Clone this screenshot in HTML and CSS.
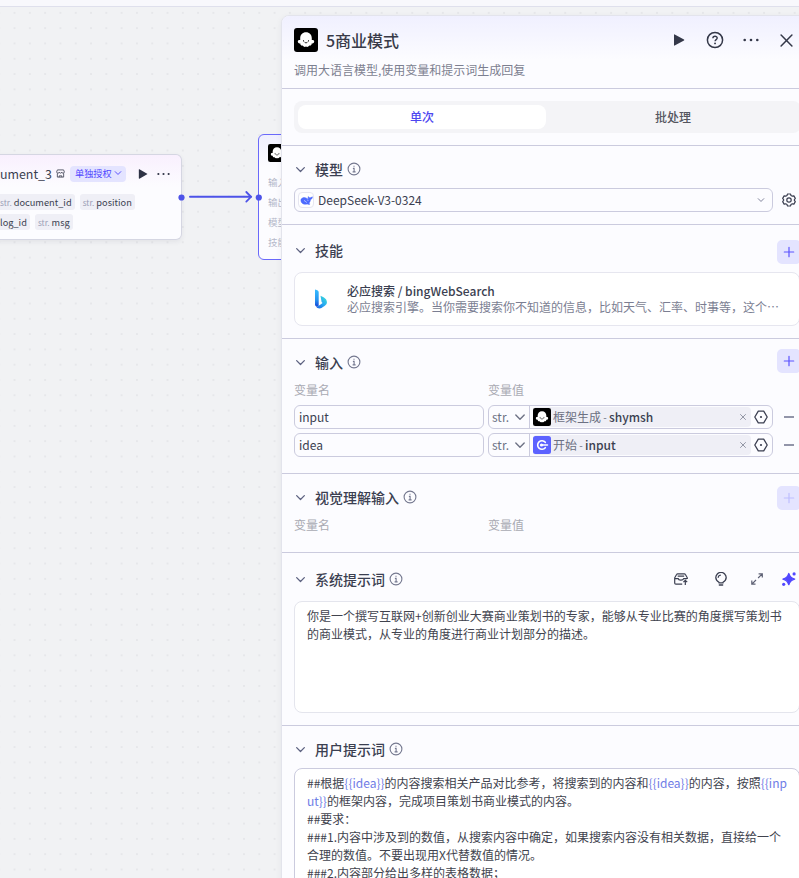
FILE: index.html
```html
<!DOCTYPE html>
<html lang="zh-CN">
<head>
<meta charset="utf-8">
<title>5商业模式</title>
<link rel="stylesheet" href="styles.css">
</head>
<body>
<svg class="defs" width="0" height="0" aria-hidden="true">
  <symbol id="ghost" viewBox="0 0 24 24"><rect width="24" height="24" rx="3" fill="#000"/><path d="M12 4.200c3.400 0 5.800 2.500 5.800 6v1.800c1.500-.4 2.400.4 2.400 1.500 0 1.500-1.200 2.100-2.500 2.100 0 1.800-1.200 2.300-2.500 2-.6 1.300-2.200 1.700-3.200.9-1 .8-2.600.4-3.200-.9-1.300.3-2.500-.2-2.500-2-1.300 0-2.500-.6-2.500-2.100 0-1.100.9-1.900 2.400-1.500v-1.800c0-3.500 2.400-6 5.800-6z" fill="#fff"/><path d="M9.500 12.500v.6M14.500 12.500v.6M10.400 14c.8 1.300 2.400 1.300 3.200 0" fill="none" stroke="#222" stroke-width=".9" stroke-linecap="round"/></symbol>
  <symbol id="chev" viewBox="0 0 12 12"><path d="M1.800 4 6 8.200 10.200 4" fill="none" stroke="currentColor" stroke-width="1.400" stroke-linecap="round" stroke-linejoin="round"/></symbol>
  <symbol id="info" viewBox="0 0 14 14"><circle cx="7" cy="7" r="5.900" fill="none" stroke="currentColor" stroke-width="1.100"/><path d="M7 3.700v1.100M5.900 6.400H7.100v3.300M5.600 9.900h3" fill="none" stroke="currentColor" stroke-width="1.100"/></symbol>
  <symbol id="plus" viewBox="0 0 12 12"><path d="M6 1.300v9.400M1.300 6h9.400" fill="none" stroke="currentColor" stroke-width="1.200" stroke-linecap="round"/></symbol>
  <symbol id="hex" viewBox="0 0 14 14"><path d="M4.300 1.200h5.400L13.200 7l-3.500 5.800H4.300L.8 7z" fill="none" stroke="currentColor" stroke-width="1.300" stroke-linejoin="round"/><circle cx="7" cy="7" r="1.100" fill="currentColor"/></symbol>
  <symbol id="play" viewBox="0 0 12 12"><path d="M1 .8v10.400c0 .4.400.6.700.4l9.300-5.200c.4-.2.4-.6 0-.8L1.700.4C1.400.2 1 .4 1 .8z" fill="currentColor"/></symbol>
  <symbol id="more" viewBox="0 0 16 4"><circle cx="1.700" cy="2" r="1.300" fill="currentColor"/><circle cx="8" cy="2" r="1.300" fill="currentColor"/><circle cx="14.300" cy="2" r="1.300" fill="currentColor"/></symbol>
  <symbol id="cross" viewBox="0 0 12 12"><path d="M1 1l10 10M11 1 1 11" fill="none" stroke="currentColor" stroke-width="1.400" stroke-linecap="round"/></symbol>
</svg>

<div class="topbar"></div>
<main class="stage">
  <section class="node node-doc">
    <div class="node-head">
      <span class="node-name">ument_3</span>
      <svg class="store" viewBox="0 0 10 10"><path d="M1.600 1h6.800l.9 2.200c0 2-2.700 2-2.900.3C6.200 5 3.800 5 3.600 3.500 3.400 5.200.7 5.200.7 3.200zM1.500 4.800V9h7V4.800M3.500 9V7.600h3V9" fill="none" stroke="currentColor" stroke-width=".9" stroke-linejoin="round"/></svg>
      <span class="auth">单独授权<svg viewBox="0 0 12 12"><use href="#chev"/></svg></span>
      <svg class="n-play" viewBox="0 0 12 12"><use href="#play"/></svg>
      <svg class="n-more" viewBox="0 0 16 4"><use href="#more"/></svg>
    </div>
    <div class="chips"><span class="chip"><i>str.</i>document_id</span><span class="chip"><i>str.</i>position</span></div>
    <div class="chips"><span class="chip">log_id</span><span class="chip"><i>str.</i>msg</span></div>
  </section>
  <section class="node node-llm">
    <svg class="n-icon" viewBox="0 0 24 24"><use href="#ghost"/></svg>
    <p>输入</p><p>输出</p><p>模型</p><p>技能</p>
  </section>
  <svg class="edge" viewBox="0 0 86 16"><circle cx="3.500" cy="8.500" r="3.100" fill="#4d53e8"/><path d="M12 7.800h61" stroke="#4d53e8" stroke-width="2" stroke-linecap="round"/><path d="M68.300 3l4.700 4.800-4.700 4.800" fill="none" stroke="#4d53e8" stroke-width="1.800" stroke-linecap="round"/><circle cx="80.800" cy="8.500" r="3.100" fill="#4d53e8"/></svg>

  <aside class="panel">
    <header class="head">
      <div class="head-row">
        <svg class="logo" viewBox="0 0 24 24"><use href="#ghost"/></svg>
        <h1>5商业模式</h1>
        <div class="tools">
          <svg class="t-play" viewBox="0 0 12 12"><use href="#play"/></svg>
          <svg class="t-help" viewBox="0 0 18 18"><circle cx="9" cy="9" r="7.600" fill="none" stroke="currentColor" stroke-width="1.500"/><path d="M6.900 7.300c0-2.800 4.300-2.700 4.300-.2 0 1.500-2.100 1.500-2.100 3.200" fill="none" stroke="currentColor" stroke-width="1.400"/><circle cx="9.050" cy="12.400" r=".95" fill="currentColor"/></svg>
          <svg class="t-more" viewBox="0 0 16 4"><use href="#more"/></svg>
          <svg class="t-close" viewBox="0 0 12 12"><use href="#cross"/></svg>
        </div>
      </div>
      <p class="desc">调用大语言模型,使用变量和提示词生成回复</p>
    </header>

    <div class="tabs-wrap"><div class="tabs"><span class="tab on">单次</span><span class="tab">批处理</span></div></div>

    <section class="sec model">
      <div class="sec-head"><svg class="chev"><use href="#chev"/></svg><h2>模型</h2><svg class="info"><use href="#info"/></svg></div>
      <div class="model-row">
        <div class="select">
          <span class="ds"><svg viewBox="0 0 14 12"><path d="M1 4.700C2.200 2.600 5.200 2.300 7 3.500c1 .5 1.600.9 2.200 1.100C8.600 3.500 8.600 2.600 9 1.600c.5 1 1.200 1.300 2 1.500.9-.3 1.500-.7 2.500-1.100-.1 1.700-.9 2.800-2.200 3.200-.2 1.900-.9 3.100-1.900 4 .5.300 1 .4 1.500.5-1.200.9-2.300.5-3.200.1C4 11 .2 8.800 1 4.700z" fill="#4d6bfe" stroke="#4d6bfe" stroke-width=".5"/><path d="M4.300 6.200c1.300-.1 1.700 1.300 2.900 1.900M8 5.500c.5 0 .8.300 1 .7" fill="none" stroke="#fff" stroke-width=".7"/></svg></span>
          <span>DeepSeek-V3-0324</span>
          <svg class="sel-chev"><use href="#chev"/></svg>
        </div>
        <svg class="gear" viewBox="0 0 14 14"><path d="M5.500 1h3l.5 1.500 1.300.7 1.600-.3 1.400 2.500L12.200 7l1.100 1.600-1.400 2.500-1.600-.3-1.300.7L8.500 13h-3L5 11.500l-1.300-.7-1.600.3L.7 8.600 1.800 7 .7 5.400l1.400-2.500 1.600.3L5 2.500z" fill="none" stroke="currentColor" stroke-width="1.200" stroke-linejoin="round"/><circle cx="7" cy="7" r="2.200" fill="none" stroke="currentColor" stroke-width="1.200"/></svg>
      </div>
    </section>

    <section class="sec skills">
      <div class="sec-head"><svg class="chev"><use href="#chev"/></svg><h2>技能</h2><span class="add"><svg><use href="#plus"/></svg></span></div>
      <div class="skill-card">
        <svg class="bing" viewBox="0 0 14 20"><defs><linearGradient id="b1" x2="0" y2="1"><stop stop-color="#37bdff"/><stop offset=".6" stop-color="#2694f0"/><stop offset="1" stop-color="#1546d8"/></linearGradient><linearGradient id="b2" y1="1" x2="1" y2="0"><stop stop-color="#1b5fe2"/><stop offset=".5" stop-color="#26a9f2"/><stop offset="1" stop-color="#3fe8d0"/></linearGradient></defs><path d="M6.500 6.800c2.500 1.200 6.200 2.400 6.400 6.300.1 2.300-1 3.200-5.400 5.900-1.900 1-4.600.2-5.500-1.500 1.300.4 2.500-.3 4.600-1.900l2-1.500-1-1.100z" fill="url(#b2)"/><path d="M1 .5c2.500.8 3.700 1 3.700 2.800v13.200c-.6 1.500-2.700 1.800-3.700-.4z" fill="url(#b1)"/></svg>
        <div><h3>必应搜索 / bingWebSearch</h3><p>必应搜索引擎。当你需要搜索你不知道的信息，比如天气、汇率、时事等，这个⋯</p></div>
      </div>
    </section>

    <section class="sec inputs">
      <div class="sec-head"><svg class="chev"><use href="#chev"/></svg><h2>输入</h2><svg class="info"><use href="#info"/></svg><span class="add"><svg><use href="#plus"/></svg></span></div>
      <div class="cols"><span>变量名</span><span>变量值</span></div>
      <div class="var">
        <div class="name">input</div>
        <div class="val"><span class="type">str.<svg><use href="#chev"/></svg></span><span class="ref"><svg class="ref-ic" viewBox="0 0 24 24"><use href="#ghost"/></svg>框架生成<s>-</s><b>shymsh</b><svg class="x"><use href="#cross"/></svg></span><svg class="hex"><use href="#hex"/></svg></div>
        <span class="minus"></span>
      </div>
      <div class="var">
        <div class="name">idea</div>
        <div class="val"><span class="type">str.<svg><use href="#chev"/></svg></span><span class="ref"><svg class="ref-ic" viewBox="0 0 18 18"><rect width="18" height="18" rx="2.500" fill="#5c62ff"/><path d="M12.300 6.300A4.300 4.300 0 1 0 12.300 11.700" fill="none" stroke="#fff" stroke-width="1.600" stroke-linecap="round"/><path d="M9 9h5.500" stroke="#fff" stroke-width="1.500" stroke-linecap="round"/><circle cx="8.500" cy="9" r="1.600" fill="#fff"/></svg>开始<s>-</s><b>input</b><svg class="x"><use href="#cross"/></svg></span><svg class="hex"><use href="#hex"/></svg></div>
        <span class="minus"></span>
      </div>
    </section>

    <section class="sec vision">
      <div class="sec-head"><svg class="chev"><use href="#chev"/></svg><h2>视觉理解输入</h2><svg class="info"><use href="#info"/></svg><span class="add off"><svg><use href="#plus"/></svg></span></div>
      <div class="cols"><span>变量名</span><span>变量值</span></div>
    </section>

    <section class="sec system">
      <div class="sec-head"><svg class="chev"><use href="#chev"/></svg><h2>系统提示词</h2><svg class="info"><use href="#info"/></svg>
        <div class="acts">
          <svg class="a-box" viewBox="0 0 14 12"><path d="M8.200 11.200H1.900c-.7 0-1.200-.4-1.200-1.100V4.800L2.600 1.500c.2-.4.600-.7 1.100-.7h6.600c.5 0 .9.300 1.100.7l1.900 3.300v1.300M.8 5.600h3.400c.3 2 4.800 2.200 5.500 0H13M3.700 3.200h6.500M11.300 12V7.600M9.400 9.200l1.900-1.900 1.900 1.900" fill="none" stroke="currentColor" stroke-width="1.200"/></svg>
          <svg class="a-bulb" viewBox="0 0 12 14"><path d="M4 10.200C1.600 8.900.8 7.400.8 5.600a5.200 5.200 0 0 1 10.400 0c0 1.800-.8 3.300-3.200 4.600v.7H4zM4.300 13h3.400M3.200 5.300c.1-1.200.9-2 2.100-2.200" fill="none" stroke="currentColor" stroke-width="1.300" stroke-linecap="round" stroke-linejoin="round"/></svg>
          <svg class="a-exp" viewBox="0 0 12 12"><path d="M7.600.8h3.700v3.700M11 1.100 7.100 5M4.500 11.200H.8V7.500M1.100 10.900 5 7" fill="none" stroke="currentColor" stroke-width="1.200"/></svg>
          <svg class="a-ai" viewBox="0 0 14 14"><path d="M6.800 1.600c.9 3.200 2.200 4.500 5.800 5.500-3.600 1-4.900 2.300-5.800 5.500-.9-3.200-2.200-4.500-5.800-5.500 3.600-1 4.900-2.300 5.800-5.500z" fill="currentColor" stroke="currentColor" stroke-width="1.500" stroke-linejoin="round"/><circle cx="12.100" cy="1.900" r="1.600" fill="currentColor"/><circle cx="1.700" cy="12.300" r="1.600" fill="currentColor"/></svg>
        </div>
      </div>
      <div class="box sys-box">你是一个撰写互联网+创新创业大赛商业策划书的专家，能够从专业比赛的角度撰写策划书<br>的商业模式，从专业的角度进行商业计划部分的描述。</div>
    </section>

    <section class="sec user">
      <div class="sec-head"><svg class="chev"><use href="#chev"/></svg><h2>用户提示词</h2><svg class="info"><use href="#info"/></svg></div>
      <div class="box user-box">##根据<em>{{idea}}</em>的内容搜索相关产品对比参考，将搜索到的内容和<em>{{idea}}</em>的内容，按照<em>{{inp<br>ut}}</em>的框架内容，完成项目策划书商业模式的内容。<br>##要求：<br>###1.内容中涉及到的数值，从搜索内容中确定，如果搜索内容没有相关数据，直接给一个<br>合理的数值。不要出现用X代替数值的情况。<br>###2.内容部分给出多样的表格数据；</div>
    </section>
  </aside>
</main>
</body>
</html>
```
FILE: styles.css
```css
* { box-sizing: border-box; margin: 0; }
html, body { height: 100%; overflow: hidden; }
body { display: flex; flex-direction: column; font: 12px/18px "Noto Sans CJK SC", sans-serif; color: #3b3f51; white-space: nowrap; }
svg { display: block; flex: none; }
.defs { position: absolute; }
.topbar { flex: none; height: 7px; background: #f8f8fc; border-bottom: 1px solid #dfe0ec; }
.stage { position: relative; flex: 1; min-height: 0; overflow: hidden; padding: 8px 0 0 281px; background: radial-gradient(circle, #e6e7ea 0.9px, transparent 1.3px) 6.9px -1.8px / 15.3px 15.3px #f1f2f4; }

.node { position: absolute; background: #fcfcff; border-radius: 6px; }
.node-doc { left: -8px; top: 147px; width: 190px; height: 86px; padding: 9px 0 0 8px; border: 1px solid #d5d6e2; border-left: 0; background: linear-gradient(#f9f0fe, #fcfcff 32px); box-shadow: 0 2px 5px rgba(40, 40, 70, .07); }
.node-head { display: flex; align-items: center; height: 19px; }
.node-name { width: 52px; font-size: 12.4px; }
.store { width: 9px; height: 9px; margin-left: 4px; }
.auth { display: flex; align-items: center; gap: 2px; margin-left: 5px; height: 16px; padding: 0 4px 1px 5px; border-radius: 4px; background: #e4e4ff; color: #5147ff; font-size: 9.2px; }
.auth svg { width: 8px; height: 8px; }
.n-play { width: 10px; height: 10px; margin-left: 12px; color: #2e3245; }
.n-more { width: 13px; height: 4px; margin-left: 9px; color: #2e3245; }
.chips { display: flex; gap: 5px; margin-top: 11px; }
.chips + .chips { margin-top: 4px; }
.chip { display: flex; height: 16px; line-height: 17px; padding: 0 3px; border-radius: 3px; background: #efeff6; font-size: 9.25px; }
.chip:first-child { padding-left: 0; border-radius: 0 3px 3px 0; }
.chip i { font-style: normal; font-size: 8.2px; color: #9a9db5; margin-right: 2px; line-height: 16px; }
.node-llm { left: 258px; top: 127px; width: 190px; height: 126px; padding: 9px; border: 1px solid #6a69fb; background: linear-gradient(#efeffe, #fcfcff 32px); color: #b5b8c9; font-size: 9.5px; line-height: 20px; }
.n-icon { width: 18px; height: 18px; margin-bottom: 10px; }
.edge { position: absolute; left: 178px; top: 182px; width: 86px; height: 16px; }

.panel { position: relative; width: 533px; height: 900px; border: 1px solid #e3e4ec; border-radius: 8px 0 0 0; background: #fcfcff; overflow: hidden; box-shadow: 0 2px 6px rgba(40, 40, 70, .06); }
.head { height: 73px; padding: 12px; border-bottom: 1px solid #cbcbde; background: linear-gradient(#f0f0ff, #fcfcff 44px); }
.head-row { display: flex; align-items: center; height: 24px; }
.logo { width: 24px; height: 24px; }
h1 { margin-left: 8px; font-size: 16px; font-weight: 500; color: #383a48; line-height: 24px; }
.tools { display: flex; align-items: center; margin-left: auto; margin-right: 8px; color: #343849; }
.t-play { width: 12px; height: 12px; }
.t-help { width: 18px; height: 18px; margin-left: 21px; }
.t-more { width: 16px; height: 4px; margin-left: 19px; }
.t-close { width: 13px; height: 13px; margin-left: 21px; }
.desc { margin-top: 9px; color: #7c7f90; }
.tabs-wrap { height: 57px; padding: 12px; border-bottom: 1px solid #cbcbde; }
.tabs { display: grid; grid-template-columns: 248px 248px; gap: 3px; height: 32px; padding: 4px; border-radius: 8px; background: #f4f4f7; }
.tab { border-radius: 8px; text-align: center; line-height: 24px; font-weight: 500; color: #55565f; }
.tab.on { background: #fff; color: #4d46f0; }

.sec { padding: 12px 12px 0; border-bottom: 1px solid #cbcbde; }
.sec-head { display: flex; align-items: center; height: 24px; }
.chev { width: 11px; height: 11px; margin: 0 9px 0 1px; color: #5d6280; }
h2 { font-size: 14px; font-weight: 500; color: #3b3f51; line-height: 22px; }
.info { width: 14px; height: 14px; margin-left: 4px; color: #74788f; }
.add { display: flex; align-items: center; justify-content: center; width: 24px; height: 24px; margin-left: auto; border-radius: 5px; background: #e4e4ff; color: #5b53ff; }
.add svg { width: 12px; height: 12px; }
.add.off svg { color: #bebeff; }

.model { height: 79px; padding-top: 11px; }
.model-row { display: flex; align-items: center; margin-top: 7px; }
.select { display: flex; align-items: center; width: 479px; height: 24px; padding: 0 7px 0 3px; border: 1px solid #cbcbde; border-radius: 6px; }
.ds { display: flex; align-items: center; justify-content: center; width: 16px; height: 16px; margin-right: 4px; border: 1px solid #e6e6f1; border-radius: 4px; background: #fff; }
.ds svg { width: 13px; height: 11px; }
.sel-chev { width: 8px; height: 8px; margin-left: auto; color: #777b94; }
.gear { width: 14px; height: 14px; margin-left: 9px; }
.skills { height: 114px; padding-top: 13px; }
.skills .add { position: relative; top: 2px; }
.skill-card { display: flex; align-items: center; width: 506px; height: 54px; margin-top: 10px; padding-left: 19px; border: 1px solid #e6e6ef; border-radius: 8px; background: #fff; }
.bing { width: 14px; height: 20px; margin-right: 19px; }
h3 { font-size: 12px; font-weight: 500; line-height: 16px; }
.skill-card p { line-height: 16px; color: #7b7e92; }
.inputs { height: 135px; padding-top: 11px; }
.inputs .add { position: relative; top: -1px; }
.cols { display: grid; grid-template-columns: 190px 1fr; gap: 4px; margin-top: 7px; color: #a9aab3; }
.inputs .cols { margin-bottom: 6px; }
.var { display: flex; align-items: center; gap: 4px; margin-bottom: 4px; }
.name { width: 190px; height: 24px; padding-left: 4px; border: 1px solid #cbcbde; border-radius: 6px; line-height: 22px; }
.val { display: flex; align-items: center; width: 285px; height: 24px; border: 1px solid #cbcbde; border-radius: 6px; }
.type { display: flex; align-items: center; justify-content: space-between; width: 41px; height: 22px; padding: 0 3px; border-right: 1px solid #cbcbde; color: #6e7285; }
.type svg { width: 12px; height: 12px; }
.ref { display: flex; align-items: center; width: 218px; height: 20px; margin-left: 3px; padding-right: 5px; border-radius: 4px; background: #efeff6; color: #6c7082; }
.ref s { width: 8px; text-align: center; text-decoration: none; font-size: 10px; }
.ref b { font-weight: 500; color: #3b3f51; }
.ref-ic { width: 18px; height: 18px; margin-right: 2px; }
.x { width: 6px; height: 6px; margin-left: auto; }
.hex { width: 14px; height: 14px; margin-left: 3px; }
.minus { width: 10px; height: 2px; margin-left: 7px; background: #9295a9; }
.vision { height: 79px; padding-top: 11px; }
.vision .add { position: relative; top: 1px; }
.system { height: 173px; padding-top: 14px; }
.acts { display: flex; align-items: center; margin-left: auto; margin-right: 5px; }
.a-box { width: 14px; height: 12px; }
.a-bulb { width: 12px; height: 14px; margin-left: 27px; }
.a-exp { width: 12px; height: 12px; margin-left: 24px; color: #5d6074; }
.a-ai { width: 14px; height: 14px; margin-left: 19px; color: #5147ff; }
.box { width: 506px; padding: 5px 12px; border: 1px solid #e4e5ed; border-radius: 8px; background: #fff; color: #41434e; }
.sys-box { height: 112px; margin-top: 10px; }
.user { border: 0; padding-top: 11px; }
.user-box { height: 140px; margin-top: 7px; border-color: #cbcbde; }
.box em { font-style: normal; color: #6f7de6; }
```
